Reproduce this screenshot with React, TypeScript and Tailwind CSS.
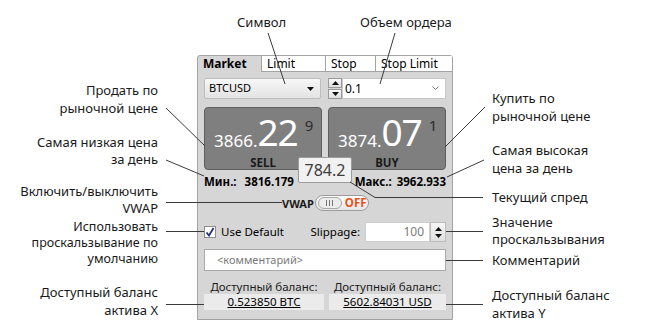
import React from "react";

const F = { fontFamily: '"Noto Sans", "Open Sans", sans-serif' };

function Spinner({ h }: { h: string }) {
  return (
    <div className={`flex flex-col justify-between w-[14px] ${h}`}>
      <div className="h-[10px] border border-[#9a9a9a] bg-gradient-to-b from-[#fafafa] to-[#dedede] flex items-center justify-center">
        <svg width="7" height="4" viewBox="0 0 7 4"><path d="M0 4 L3.5 0 L7 4 Z" fill="#111" /></svg>
      </div>
      <div className="h-[10px] border border-[#9a9a9a] bg-gradient-to-b from-[#fafafa] to-[#dedede] flex items-center justify-center">
        <svg width="7" height="4" viewBox="0 0 7 4"><path d="M0 0 L3.5 4 L7 0 Z" fill="#111" /></svg>
      </div>
    </div>
  );
}

function PriceButton({ big, mid, sup, label }: { big: string; mid: string; sup: string; label: string }) {
  return (
    <div className="w-[118px] h-[63px] rounded-[4px] bg-[#7f7f7f] border border-[#5e5e5e] flex flex-col">
      <div className="flex items-start pl-[9px] h-[47px] whitespace-nowrap">
        <span className="text-white text-[17px] leading-none mt-[24px]">{big}</span>
        <span className="text-white text-[37px] leading-none mt-[5px] tracking-[-1px]">{mid}</span>
        <span className="text-[#2d2d2d] text-[15px] leading-none ml-[7px] mt-[10px]">{sup}</span>
      </div>
      <div className="flex justify-center text-[11.5px] font-bold text-[#1a1a1a] leading-none mt-[2px]">{label}</div>
    </div>
  );
}

export default function App() {
  return (
    <div className="relative w-[650px] h-[332px] bg-white overflow-hidden pl-[197px] pt-[55px]" style={F}>
      {/* Panel */}
      <div className="relative w-[256px] h-[265px] border border-[#a3a3a3] rounded-t-[3px] bg-[#d6d6d6] flex flex-col">
        {/* Tabs */}
        <div className="flex h-[16px] text-[12px] leading-none whitespace-nowrap">
          <div className="w-[63px] flex items-center pl-[5px] font-bold text-black">Market</div>
          <div className="w-[64px] flex items-center pl-[5px] bg-white border-l border-b border-[#a3a3a3] text-black">Limit</div>
          <div className="w-[50px] flex items-center pl-[5px] bg-white border-l border-b border-[#a3a3a3] text-black">Stop</div>
          <div className="flex-1 flex items-center pl-[5px] bg-white border-l border-b border-[#a3a3a3] text-black">Stop Limit</div>
        </div>

        <div className="flex flex-col px-[6px]">
          {/* Symbol + volume */}
          <div className="flex h-[21px] mt-[6px]">
            <div className="w-[117px] h-full rounded-[2px] border border-[#bdbdbd] bg-gradient-to-b from-[#f7f7f7] to-[#e3e3e3] flex items-center justify-between pl-[4px] pr-[6px]">
              <span className="text-[11px] text-black">BTCUSD</span>
              <svg width="7" height="4" viewBox="0 0 7 4"><path d="M0 0 L3.5 4 L7 0 Z" fill="#111" /></svg>
            </div>
            <div className="ml-[7px]">
              <Spinner h="h-[21px]" />
            </div>
            <div className="flex-1 h-full bg-white border border-[#c6c6c6] flex items-center justify-between pl-[2px] pr-[6px]">
              <span className="text-[12px] text-black">0.1</span>
              <svg width="7" height="5" viewBox="0 0 7 5"><path d="M0.5 0.5 L3.5 3.5 L6.5 0.5" fill="none" stroke="#777" strokeWidth="1" /></svg>
            </div>
          </div>

          {/* Buttons */}
          <div className="flex justify-between mt-[8px]">
            <PriceButton big="3866." mid="22" sup="9" label="SELL" />
            <PriceButton big="3874." mid="07" sup="1" label="BUY" />
          </div>

          {/* Min/Max */}
          <div className="flex justify-between items-center h-[24px] text-[11.5px] font-bold text-black whitespace-nowrap">
            <div className="flex">
              <span>Мин.:</span>
              <span className="ml-[8px]">3816.179</span>
            </div>
            <div className="flex">
              <span>Макс.:</span>
              <span className="ml-[5px]">3962.933</span>
            </div>
          </div>

          {/* VWAP */}
          <div className="flex items-center h-[18px] pl-[78px]">
            <span className="text-[11px] font-bold text-[#1a1a1a] leading-none">VWAP</span>
            <div className="ml-[1px] w-[54px] h-[16px] rounded-full border border-[#9c9c9c] bg-gradient-to-b from-[#fbfbfb] to-[#e6e6e6] flex items-center pl-[2px]">
              <div className="w-[24px] h-[12px] rounded-full border border-[#a8a8a8] bg-[#ececec] flex items-center justify-center gap-[2px]">
                <span className="w-[1px] h-[6px] bg-[#777]" />
                <span className="w-[1px] h-[6px] bg-[#777]" />
                <span className="w-[1px] h-[6px] bg-[#777]" />
              </div>
              <span className="ml-[3px] text-[11.5px] font-bold text-[#e8531c] leading-none">OFF</span>
            </div>
          </div>

          {/* Use default + slippage */}
          <div className="flex items-center h-[20px] mt-[10px] whitespace-nowrap">
            <div className="w-[12px] h-[12px] bg-white border border-[#8f8f8f] flex items-center justify-center">
              <svg width="10" height="10" viewBox="0 0 10 10"><path d="M1.5 5.5 L4 8.5 L8.5 1" fill="none" stroke="#23307a" strokeWidth="1.8" /></svg>
            </div>
            <span className="ml-[5px] text-[11.5px] text-black">Use Default</span>
            <span className="ml-auto mr-[5px] text-[11.5px] text-black">Slippage:</span>
            <div className="flex h-[20px]">
              <div className="w-[65px] h-full bg-white border border-[#cfcfcf] flex items-center justify-end pr-[5px]">
                <span className="text-[12px] text-[#7a7a7a]">100</span>
              </div>
              <div className="w-[16px] h-full flex flex-col bg-gradient-to-b from-[#f6f6f6] to-[#dedede] border border-[#bdbdbd] items-center justify-center gap-[3px]">
                <svg width="7" height="4" viewBox="0 0 7 4"><path d="M0 4 L3.5 0 L7 4 Z" fill="#111" /></svg>
                <svg width="7" height="4" viewBox="0 0 7 4"><path d="M0 0 L3.5 4 L7 0 Z" fill="#111" /></svg>
              </div>
            </div>
          </div>

          {/* Comment */}
          <div className="h-[22px] mt-[7px] bg-white border border-[#a9a9a9] flex items-center pl-[12px]">
            <span className="text-[11px] text-[#7a7a7a]">&lt;комментарий&gt;</span>
          </div>

          {/* Balance labels */}
          <div className="flex h-[23px] items-end text-[11.5px] text-[#1a1a1a] leading-[14px] whitespace-nowrap">
            <div className="w-[120px] text-center">Доступный баланс:</div>
            <div className="ml-[5px] flex-1 text-center">Доступный баланс:</div>
          </div>

          {/* Balance values */}
          <div className="flex h-[16px] text-[11.5px] text-black whitespace-nowrap">
            <div className="w-[120px] bg-[#ebebeb] flex items-center justify-center">
              <span className="underline">0.523850 BTC</span>
            </div>
            <div className="ml-[5px] flex-1 bg-[#ebebeb] flex items-center justify-center">
              <span className="underline">5602.84031 USD</span>
            </div>
          </div>
        </div>

        {/* Spread overlay */}
        <div className="absolute left-[100px] top-[101px] w-[54px] h-[26px] rounded-[2px] bg-[#f1f1f1] border border-[#9c9c9c] flex items-center justify-center">
          <span className="text-[16px] text-[#3d3d3d] leading-none">784.2</span>
        </div>
      </div>

      {/* Top annotations */}
      <div className="absolute left-[237px] top-[14px] text-[13px] leading-[17px] text-[#1a1a1a]">Символ</div>
      <div className="absolute left-[360px] top-[14px] text-[13px] leading-[17px] text-[#1a1a1a] whitespace-nowrap">Объем ордера</div>

      {/* Left annotations */}
      <div className="absolute right-[492px] top-[81px] text-right text-[13px] leading-[18px] text-[#1a1a1a] whitespace-nowrap">Продать по<br />рыночной цене</div>
      <div className="absolute right-[492px] top-[134px] text-right text-[13px] leading-[17px] text-[#1a1a1a] whitespace-nowrap">Самая низкая цена<br />за день</div>
      <div className="absolute right-[492px] top-[183px] text-right text-[13px] leading-[17px] text-[#1a1a1a] whitespace-nowrap">Включить/выключить<br />VWAP</div>
      <div className="absolute right-[492px] top-[219px] text-right text-[12.5px] leading-[16px] text-[#1a1a1a] whitespace-nowrap">Использовать<br />проскальзывание по<br />умолчанию</div>
      <div className="absolute right-[492px] top-[283px] text-right text-[13px] leading-[18px] text-[#1a1a1a] whitespace-nowrap">Доступный баланс<br />актива X</div>

      {/* Right annotations */}
      <div className="absolute left-[492px] top-[89px] text-[13px] leading-[18px] text-[#1a1a1a] whitespace-nowrap">Купить по<br />рыночной цене</div>
      <div className="absolute left-[492px] top-[141px] text-[13px] leading-[18px] text-[#1a1a1a] whitespace-nowrap">Самая высокая<br />цена за день</div>
      <div className="absolute left-[492px] top-[188px] text-[13px] leading-[18px] text-[#1a1a1a] whitespace-nowrap">Текущий спред</div>
      <div className="absolute left-[492px] top-[214px] text-[13px] leading-[17px] text-[#1a1a1a] whitespace-nowrap">Значение<br />проскальзывания</div>
      <div className="absolute left-[492px] top-[251px] text-[13px] leading-[18px] text-[#1a1a1a] whitespace-nowrap">Комментарий</div>
      <div className="absolute left-[492px] top-[286px] text-[13px] leading-[18px] text-[#1a1a1a] whitespace-nowrap">Доступный баланс<br />актива Y</div>

      {/* Leader lines */}
      <svg className="absolute left-0 top-0 pointer-events-none" width="650" height="332" viewBox="0 0 650 332">
        <g stroke="#3a3a3a" strokeWidth="1" fill="none">
          <path d="M268 33 L285 84" />
          <path d="M395 33 L380 84" />
          <path d="M166 108 L205 146" />
          <path d="M166 160 L204 176" />
          <path d="M166 202.5 L282 202.5" />
          <path d="M166 231.5 L204 231.5" />
          <path d="M166 304.5 L204 304.5" />
          <path d="M485 107 L445 147" />
          <path d="M484 160 L447 177" />
          <path d="M350 182 L375 197.5 L483 197.5" />
          <path d="M446 231.5 L483 231.5" />
          <path d="M446 260.5 L483 260.5" />
          <path d="M446 304.5 L483 304.5" />
        </g>
      </svg>
    </div>
  );
}
